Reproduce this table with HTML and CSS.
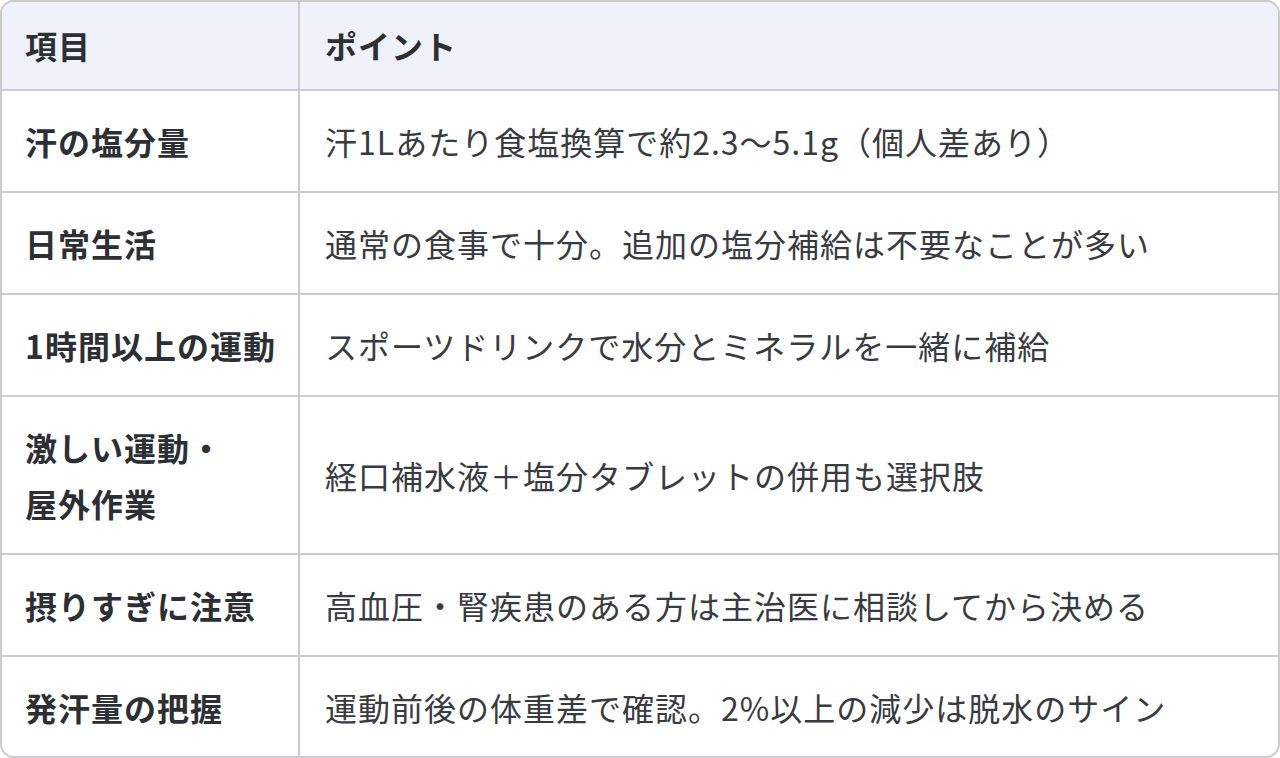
FILE: index.html
```html
<!DOCTYPE html>
<html lang="ja">
<head>
<meta charset="utf-8">
<link rel="stylesheet" href="styles.css">
</head>
<body>
<table class="tbl">
  <colgroup><col class="c1"><col class="c2"></colgroup>
  <thead>
    <tr><th>項目</th><th>ポイント</th></tr>
  </thead>
  <tbody>
    <tr><td class="k">汗の塩分量</td><td>汗1Lあたり食塩換算で約2.3〜5.1g（個人差あり）</td></tr>
    <tr><td class="k">日常生活</td><td>通常の食事で十分。追加の塩分補給は不要なことが多い</td></tr>
    <tr><td class="k">1時間以上の運動</td><td>スポーツドリンクで水分とミネラルを一緒に補給</td></tr>
    <tr><td class="k">激しい運動・<br>屋外作業</td><td>経口補水液＋塩分タブレットの併用も選択肢</td></tr>
    <tr><td class="k">摂りすぎに注意</td><td>高血圧・腎疾患のある方は主治医に相談してから決める</td></tr>
    <tr><td class="k">発汗量の把握</td><td>運動前後の体重差で確認。2%以上の減少は脱水のサイン</td></tr>
  </tbody>
</table>
</body>
</html>
```
FILE: styles.css
```css
html, body {
  margin: 0;
  padding: 0;
  background: #ffffff;
}
.tbl {
  width: 1280px;
  table-layout: fixed;
  border-collapse: separate;
  border-spacing: 0;
  border: 2px solid #cbcbcd;
  border-radius: 14px;
  overflow: hidden;
  font-family: "Noto Sans CJK JP", "Noto Sans", sans-serif;
  font-size: 32px;
  line-height: 56px;
  letter-spacing: 1px;
  color: #383b40;
}
.c1 { width: 298px; }
.tbl th, .tbl td {
  text-align: left;
  vertical-align: middle;
  padding: 22px 10px 22px 23px;
  border-right: 2px solid #cbcbcd;
  border-bottom: 2px solid #cbcbcd;
}
.tbl th:last-child, .tbl td:last-child {
  border-right: none;
  padding-left: 25px;
}
.tbl tbody tr:last-child td {
  border-bottom: none;
  padding-bottom: 21px;
}
.tbl th {
  background: #eff2fb;
  font-weight: 700;
  color: #2c2f34;
  padding-top: 15px;
  padding-bottom: 16px;
}
.tbl td.k {
  font-weight: 700;
  color: #2c2f34;
  white-space: nowrap;
}
```
